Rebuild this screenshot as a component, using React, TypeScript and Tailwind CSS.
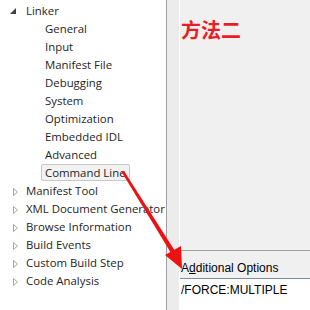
import React from "react";

const font = { fontFamily: '"Open Sans", "Noto Sans", sans-serif' };

function Expanded() {
  return (
    <svg width="8" height="8" viewBox="0 0 8 8" className="absolute left-[9px] top-[5px]">
      <path d="M7 1 L7 7 L1 7 Z" fill="#404040" />
    </svg>
  );
}
function Collapsed() {
  return (
    <svg width="8" height="10" viewBox="0 0 8 10" className="absolute left-[12px] top-[5px]">
      <path d="M1.5 1.5 L5.5 5 L1.5 8.5 Z" fill="none" stroke="#a6a6a6" strokeWidth="1" />
    </svg>
  );
}

const children = ["General", "Input", "Manifest File", "Debugging", "System", "Optimization", "Embedded IDL", "Advanced"];
const after = ["Manifest Tool", "XML Document Generator", "Browse Information", "Build Events", "Custom Build Step", "Code Analysis"];

export default function App() {
  return (
    <div className="relative flex h-[310px] w-[310px] overflow-hidden bg-[#f0f0f0]" style={font}>
      <div className="w-[167px] shrink-0 border-r border-[#a0a0a0] bg-white pt-[2px] text-[11.4px] text-[#1e1e1e]">
        <div className="relative h-[18px] pl-[26px] leading-[18px]">
          <Expanded />
          Linker
        </div>
        {children.map((c) => (
          <div key={c} className="h-[18px] whitespace-nowrap pl-[45px] leading-[18px]">{c}</div>
        ))}
        <div className="h-[18px] pl-[41px]">
          <div className="inline-block h-[17px] rounded-[2px] border border-[#c8c8c8] bg-[#f2f2f2] px-[3px] leading-[15px]">Command Line</div>
        </div>
        {after.map((c) => (
          <div key={c} className="relative h-[18px] whitespace-nowrap pl-[26px] leading-[18px]">
            <Collapsed />
            {c}
          </div>
        ))}
      </div>
      <div className="w-[12px] shrink-0 bg-[#ececec]" />
      <div className="flex min-w-0 flex-1 flex-col border-l border-white">
        <div className="flex-1 pl-[1px] pt-[18px]">
          <div className="text-[20px] font-bold leading-[24px] text-[#ec1c24]" style={{ fontFamily: '"Noto Sans CJK SC", sans-serif' }}>方法二</div>
        </div>
        <div className="h-[28px] border-t border-[#a0a0a0] pl-[1px] pt-[10px] text-[12px] leading-[14px] text-black" style={{ fontFamily: '"Liberation Sans", sans-serif' }}>
          A<span className="underline">d</span>ditional Options
        </div>
        <div className="h-[32px] border-t border-[#7a8ea8] bg-white pl-[1px] pt-[4px] text-[12px] leading-[14px] text-black" style={{ fontFamily: '"Liberation Sans", sans-serif' }}>
          /FORCE:MULTIPLE
        </div>
      </div>
      <svg className="pointer-events-none absolute left-0 top-0" width="310" height="310">
        <polygon points="121,171 124,171 175,251 171,253" fill="#ee1111" />
        <polygon points="182,269 165,255 181,246" fill="#ee1111" />
      </svg>
    </div>
  );
}
